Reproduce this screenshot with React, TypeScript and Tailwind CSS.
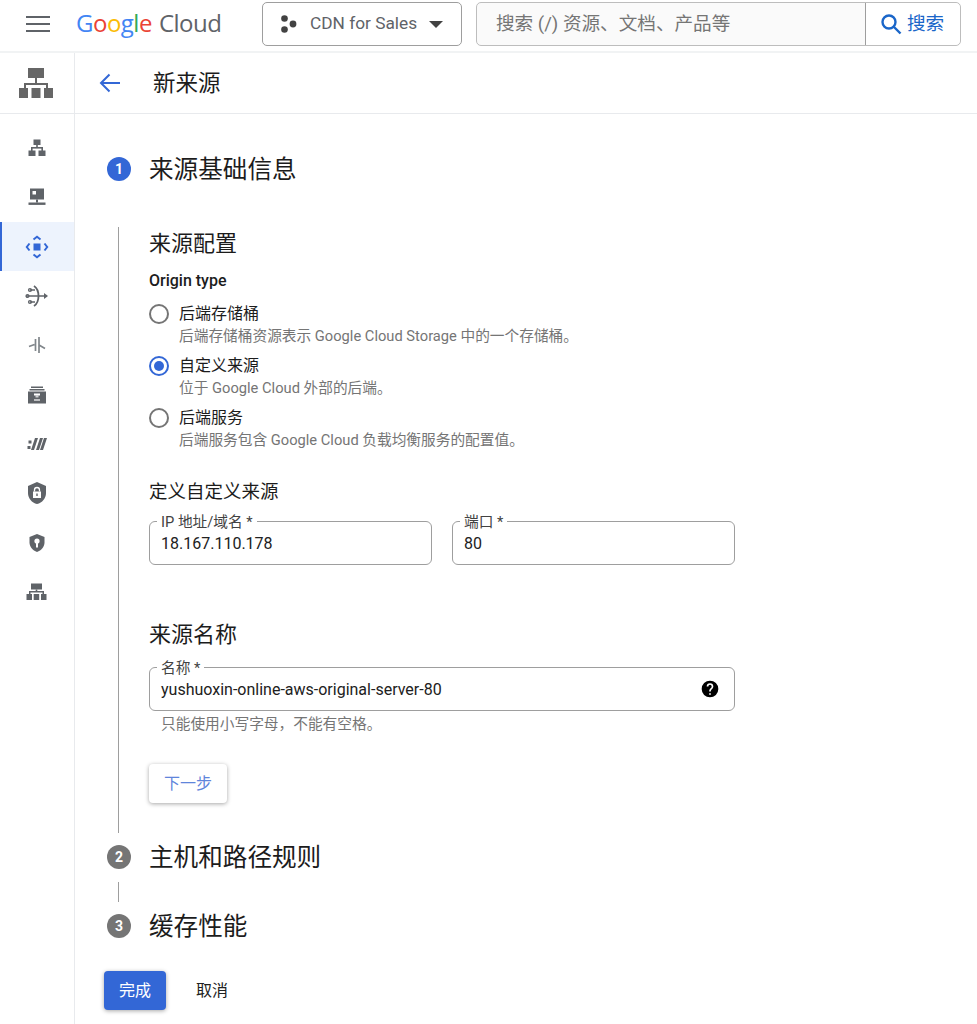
const cjk = "font-['Roboto','Noto_Sans_CJK_SC',sans-serif]";

function NetIcon() {
  return (
    <svg width="18" height="18" viewBox="0 0 18 18" fill="#5f6368">
      <rect x="5.500" y="0.500" width="7" height="5.500" />
      <rect x="8.200" y="6" width="1.600" height="3" />
      <rect x="3.500" y="8" width="11" height="1.600" />
      <rect x="3" y="8" width="1.600" height="4" />
      <rect x="13.400" y="8" width="1.600" height="4" />
      <rect x="0.500" y="11.500" width="7" height="5.500" />
      <rect x="10.500" y="11.500" width="7" height="5.500" />
    </svg>
  );
}

function ServerIcon() {
  return (
    <svg width="18" height="18" viewBox="0 0 18 18" fill="#5f6368">
      <path d="M2 0.500h14v11H2z" />
      <rect x="4.500" y="3" width="3.500" height="3.500" fill="#fff" />
      <rect x="8" y="11.500" width="2" height="3" />
      <rect x="0.500" y="14.500" width="17" height="2.400" />
    </svg>
  );
}

function BlueDiamond() {
  return (
    <svg width="24" height="24" viewBox="0 0 24 24" fill="none" stroke="#3367d6" strokeWidth="2">
      <rect x="8.500" y="8.500" width="7" height="7" fill="#3367d6" stroke="none" />
      <path d="M8.500 4.500L12 1.800l3.500 2.700M8.500 19.500l3.500 2.700 3.500-2.700M4.500 8.500L1.800 12l2.700 3.500M19.500 8.500l2.700 3.500-2.700 3.500" />
    </svg>
  );
}

function FunnelIcon() {
  return (
    <svg width="24" height="22" viewBox="0 0 24 22" fill="none" stroke="#5f6368" strokeWidth="1.400">
      <path d="M9 1c6 4 6 16 0 20" strokeWidth="1.800" />
      <path d="M1 11h19M5 5h5M5 17h5" />
      <path d="M19 8l4 3-4 3z" fill="#5f6368" stroke="none" />
      <circle cx="5" cy="5" r="1.400" />
      <circle cx="2.500" cy="11" r="1.400" />
      <circle cx="5" cy="17" r="1.400" />
    </svg>
  );
}

function SplitIcon() {
  return (
    <svg width="18" height="18" viewBox="0 0 18 18" fill="none" stroke="#80868b" strokeWidth="1.700">
      <path d="M1 10.500l5.500-2M11 1v16M7.500 3v12M11 9l6 3.500" />
    </svg>
  );
}

function ArchiveIcon() {
  return (
    <svg width="20" height="18" viewBox="0 0 20 18" fill="#5f6368">
      <rect x="4" y="0.500" width="12" height="1.500" />
      <rect x="2.500" y="3" width="15" height="1.500" />
      <rect x="1" y="5.500" width="18" height="12" />
      <rect x="7" y="7.500" width="6" height="2" fill="#fff" />
      <rect x="8.500" y="9.500" width="3" height="2" fill="#fff" opacity="0.7" />
      <rect x="7" y="13" width="6" height="2" fill="#fff" opacity="0.6" />
    </svg>
  );
}

function SlashIcon() {
  return (
    <svg width="20" height="14" viewBox="0 0 20 14" fill="#5f6368">
      <rect x="0.500" y="9" width="3" height="3" />
      <rect x="1.500" y="3.500" width="3" height="3" />
      <path d="M8 1h3L7 13H4zM13 1h3l-4 12H9zM17 1h3l-4 12h-3z" />
    </svg>
  );
}

function ShieldLock() {
  return (
    <svg width="20" height="24" viewBox="0 0 20 24" fill="#5f6368">
      <path d="M10 1l9 4v7c0 5.500-3.800 9.800-9 11-5.200-1.200-9-5.500-9-11V5z" />
      <rect x="6" y="10.500" width="8" height="6.500" fill="#fff" />
      <path d="M7.500 10.500V9a2.500 2.500 0 015 0v1.500" fill="none" stroke="#fff" strokeWidth="1.300" />
      <rect x="9.300" y="12.500" width="1.400" height="2.500" fill="#5f6368" />
    </svg>
  );
}

function ShieldKey() {
  return (
    <svg width="16" height="18" viewBox="0 0 16 18" fill="#5f6368">
      <path d="M8 0l7.500 3v5.500c0 4.300-3.200 8-7.500 9.500C3.700 16.500.5 12.800.5 8.500V3z" />
      <circle cx="8" cy="7" r="2.600" fill="#fff" />
      <rect x="7" y="8" width="2" height="5.500" fill="#fff" />
    </svg>
  );
}

function TreeIcon() {
  return (
    <svg width="21" height="18" viewBox="0 0 21 18" fill="#5f6368">
      <rect x="5" y="0.500" width="11" height="6" />
      <rect x="9.700" y="6.500" width="1.600" height="2.500" />
      <rect x="3" y="8" width="15" height="1.500" />
      <rect x="3" y="8" width="1.500" height="3" />
      <rect x="16.500" y="8" width="1.500" height="3" />
      <rect x="0.500" y="11" width="5.500" height="6" />
      <rect x="7.700" y="11" width="5.500" height="6" />
      <rect x="15" y="11" width="5.500" height="6" />
    </svg>
  );
}

function TopSiteIcon() {
  return (
    <svg width="34" height="30" viewBox="0 0 34 30" fill="#666">
      <rect x="9" y="0" width="16" height="10" />
      <rect x="16" y="10" width="2" height="6" />
      <rect x="5" y="15" width="24" height="2" />
      <rect x="5" y="15" width="2" height="5" />
      <rect x="27" y="15" width="2" height="5" />
      <rect x="0" y="20" width="9" height="10" />
      <rect x="12.500" y="20" width="9" height="10" />
      <rect x="25" y="20" width="9" height="10" />
    </svg>
  );
}

function Radio({ on, title, desc }: { on?: boolean; title: string; desc: string }) {
  return (
    <div className="flex h-[52px] items-start">
      <div
        className={`mt-[2px] flex h-[20px] w-[20px] shrink-0 items-center justify-center rounded-full border-2 ${
          on ? 'border-[#3367d6]' : 'border-[#757575]'
        }`}
      >
        {on && <div className="h-[10px] w-[10px] rounded-full bg-[#3367d6]" />}
      </div>
      <div className="ml-[10px]">
        <div className="text-[16px] leading-[24px] text-[#1c1c1c]">{title}</div>
        <div className="text-[14.700px] leading-[20px] text-[#757575]">{desc}</div>
      </div>
    </div>
  );
}

function Field({ label, value, className, help }: { label: string; value: string; className: string; help?: boolean }) {
  return (
    <div className={`relative flex h-[44px] items-center rounded-[6px] border border-[#9e9e9e] pl-[11px] pr-[14px] ${className}`}>
      <span className="absolute left-[7px] top-[-8px] bg-white px-[4px] text-[14.700px] leading-[16px] text-[#424242]">{label}</span>
      <span className="mt-[1px] flex-1 text-[16px] leading-[20px] text-[#212121]">{value}</span>
      {help && (
        <svg width="20" height="20" viewBox="0 0 24 24" fill="#000">
          <path d="M12 2a10 10 0 100 20 10 10 0 000-20zm1 17h-2v-2h2v2zm2.070-7.750l-.9.920C13.450 12.900 13 13.500 13 15h-2v-.5c0-1.100.45-2.100 1.170-2.830l1.240-1.260c.37-.36.590-.86.590-1.410a2 2 0 10-4 0H8a4 4 0 118 0c0 .88-.36 1.680-.93 2.250z" />
        </svg>
      )}
    </div>
  );
}

function StepTitle({ n, title, on }: { n: number; title: string; on?: boolean }) {
  return (
    <div className="flex h-[32px] items-center pl-[32px]">
      <div
        className={`flex h-[24px] w-[24px] items-center justify-center rounded-full text-[14px] font-bold text-white ${
          on ? 'bg-[#3367d6]' : 'bg-[#757575]'
        }`}
      >
        {n}
      </div>
      <div className="ml-[18px] pt-[1px] text-[24.600px] leading-[32px] text-[#1c1c1c]">{title}</div>
    </div>
  );
}

export default function App() {
  const sideItems = [
    <NetIcon key="net" />,
    <ServerIcon key="server" />,
    <BlueDiamond key="diamond" />,
    <FunnelIcon key="funnel" />,
    <SplitIcon key="split" />,
    <ArchiveIcon key="archive" />,
    <SlashIcon key="slash" />,
    <ShieldLock key="lock" />,
    <ShieldKey key="key" />,
    <TreeIcon key="tree" />,
  ];

  return (
    <div className={`flex h-[1024px] w-full flex-col overflow-hidden bg-white ${cjk}`}>
      <header className="flex h-[53px] shrink-0 items-center border-b-2 border-[#f1f3f4] pb-[3px]">
        <button className="ml-[26px] flex h-[16px] w-[24px] flex-col justify-between">
          <span className="h-[2px] w-full bg-[#5f6368]" />
          <span className="h-[2px] w-full bg-[#5f6368]" />
          <span className="h-[2px] w-full bg-[#5f6368]" />
        </button>
        <div className="ml-[26px] flex w-[186px] items-baseline pb-[2px] font-['Open_Sans',sans-serif] text-[24px] tracking-[-0.5px]">
          <span className="text-[#4285f4]">G</span>
          <span className="text-[#ea4335]">o</span>
          <span className="text-[#fbbc05]">o</span>
          <span className="text-[#4285f4]">g</span>
          <span className="text-[#34a853]">l</span>
          <span className="text-[#ea4335]">e</span>
          <span className="ml-[7px] text-[#5f6368]">Cloud</span>
        </div>
        <div className="flex h-[44px] w-[200px] items-center rounded-[5px] border border-[#9e9e9e] pl-[17px]">
          <svg width="20" height="18" viewBox="0 0 20 18" fill="#424242">
            <circle cx="4.500" cy="3.500" r="3.300" />
            <circle cx="4.500" cy="14.500" r="3.300" />
            <circle cx="13" cy="9" r="3.400" />
          </svg>
          <span className="ml-[10px] text-[17.300px] text-[#5f6368]">CDN for Sales</span>
          <span className="ml-[12px] h-0 w-0 border-x-[7px] border-t-[7px] border-x-transparent border-t-[#424242]" />
        </div>
        <div className="ml-[14px] flex h-[44px] w-[485px] items-stretch rounded-[5px] border border-[#bdbdbd] bg-[#fafafa]">
          <div className="flex flex-1 items-center pl-[19px] pt-[2px] text-[18.600px] text-[#757575]">搜索 (/) 资源、文档、产品等</div>
          <div className="flex w-[95px] items-center rounded-r-[5px] border-l border-[#9e9e9e] bg-white pl-[14px] text-[#1a66c9]">
            <svg width="22" height="22" viewBox="0 0 22 22" fill="none" stroke="#1a66c9" strokeWidth="2.400">
              <circle cx="9" cy="9" r="6.500" />
              <path d="M14 14l6.500 6.500" />
            </svg>
            <span className="ml-[5px] pt-[2px] text-[18.600px]">搜索</span>
          </div>
        </div>
      </header>

      <div className="flex min-h-0 flex-1">
        <aside className="w-[75px] shrink-0 border-r border-[#e8eaed]">
          <div className="flex h-[61px] items-center justify-center border-b border-[#e8eaed] pr-[3px]">
            <TopSiteIcon />
          </div>
          <div className="mt-[9.500px]">
            {sideItems.map((icon, i) => (
              <div
                key={i}
                className={`flex h-[49.300px] items-center justify-center border-l-2 pr-[3px] ${
                  i === 2 ? 'border-[#3367d6] bg-[#edf3fd]' : 'border-transparent'
                }`}
              >
                {icon}
              </div>
            ))}
          </div>
        </aside>

        <main className="min-w-0 flex-1">
          <div className="flex h-[61px] items-center border-b border-[#e8eaed] pl-[24px]">
            <svg width="22" height="20" viewBox="0 0 22 20" fill="none" stroke="#3367d6" strokeWidth="2">
              <path d="M21 10H2M10.500 1.500L2 10l8.500 8.500" />
            </svg>
            <h1 className="ml-[32px] text-[22.500px] font-normal leading-[30px] text-[#1c1c1c]">新来源</h1>
          </div>

          <div className="pt-[39px]">
            <StepTitle n={1} title="来源基础信息" on />
            <div className="ml-[43px] mt-[42px] h-[606px] border-l border-[#9e9e9e] pl-[30px] pt-[2px]">
              <h2 className="h-[30px] text-[22px] font-normal leading-[30px] text-[#1c1c1c]">来源配置</h2>
              <div className="mt-[12px] text-[16px] font-medium leading-[20px] text-[#1c1c1c]">Origin type</div>
              <div className="mt-[11px]">
                <Radio title="后端存储桶" desc="后端存储桶资源表示 Google Cloud Storage 中的一个存储桶。" />
                <Radio on title="自定义来源" desc="位于 Google Cloud 外部的后端。" />
                <Radio title="后端服务" desc="后端服务包含 Google Cloud 负载均衡服务的配置值。" />
              </div>
              <h3 className="mt-[21px] text-[18.500px] font-normal leading-[26px] text-[#1c1c1c]">定义自定义来源</h3>
              <div className="mt-[16px] flex gap-[20px]">
                <Field label="IP 地址/域名 *" value="18.167.110.178" className="w-[283px]" />
                <Field label="端口 *" value="80" className="w-[283px]" />
              </div>
              <h2 className="mt-[55px] h-[30px] text-[22px] font-normal leading-[30px] text-[#1c1c1c]">来源名称</h2>
              <Field label="名称 *" value="yushuoxin-online-aws-original-server-80" className="mt-[17px] w-[586px]" help />
              <div className="mt-[3px] pl-[12px] text-[14.700px] leading-[20px] text-[#757575]">只能使用小写字母，不能有空格。</div>
              <button className="mt-[30px] h-[39px] w-[78px] rounded-[4px] bg-white text-[16px] text-[#5f85db] shadow-[0_1px_4px_rgba(0,0,0,0.35)]">
                下一步
              </button>
            </div>
            <div className="mt-[8px]">
              <StepTitle n={2} title="主机和路径规则" />
            </div>
            <div className="ml-[43px] mt-[9px] h-[20px] border-l border-[#9e9e9e]" />
            <div className="mt-[8px]">
              <StepTitle n={3} title="缓存性能" />
            </div>
            <div className="mt-[29px] flex items-center pl-[29px]">
              <button className="h-[39px] w-[62px] rounded-[4px] bg-[#3367d6] text-[16px] text-white shadow-[0_1px_4px_rgba(0,0,0,0.35)]">
                完成
              </button>
              <button className="ml-[30px] text-[16px] text-[#212121]">取消</button>
            </div>
          </div>
        </main>
      </div>
    </div>
  );
}
